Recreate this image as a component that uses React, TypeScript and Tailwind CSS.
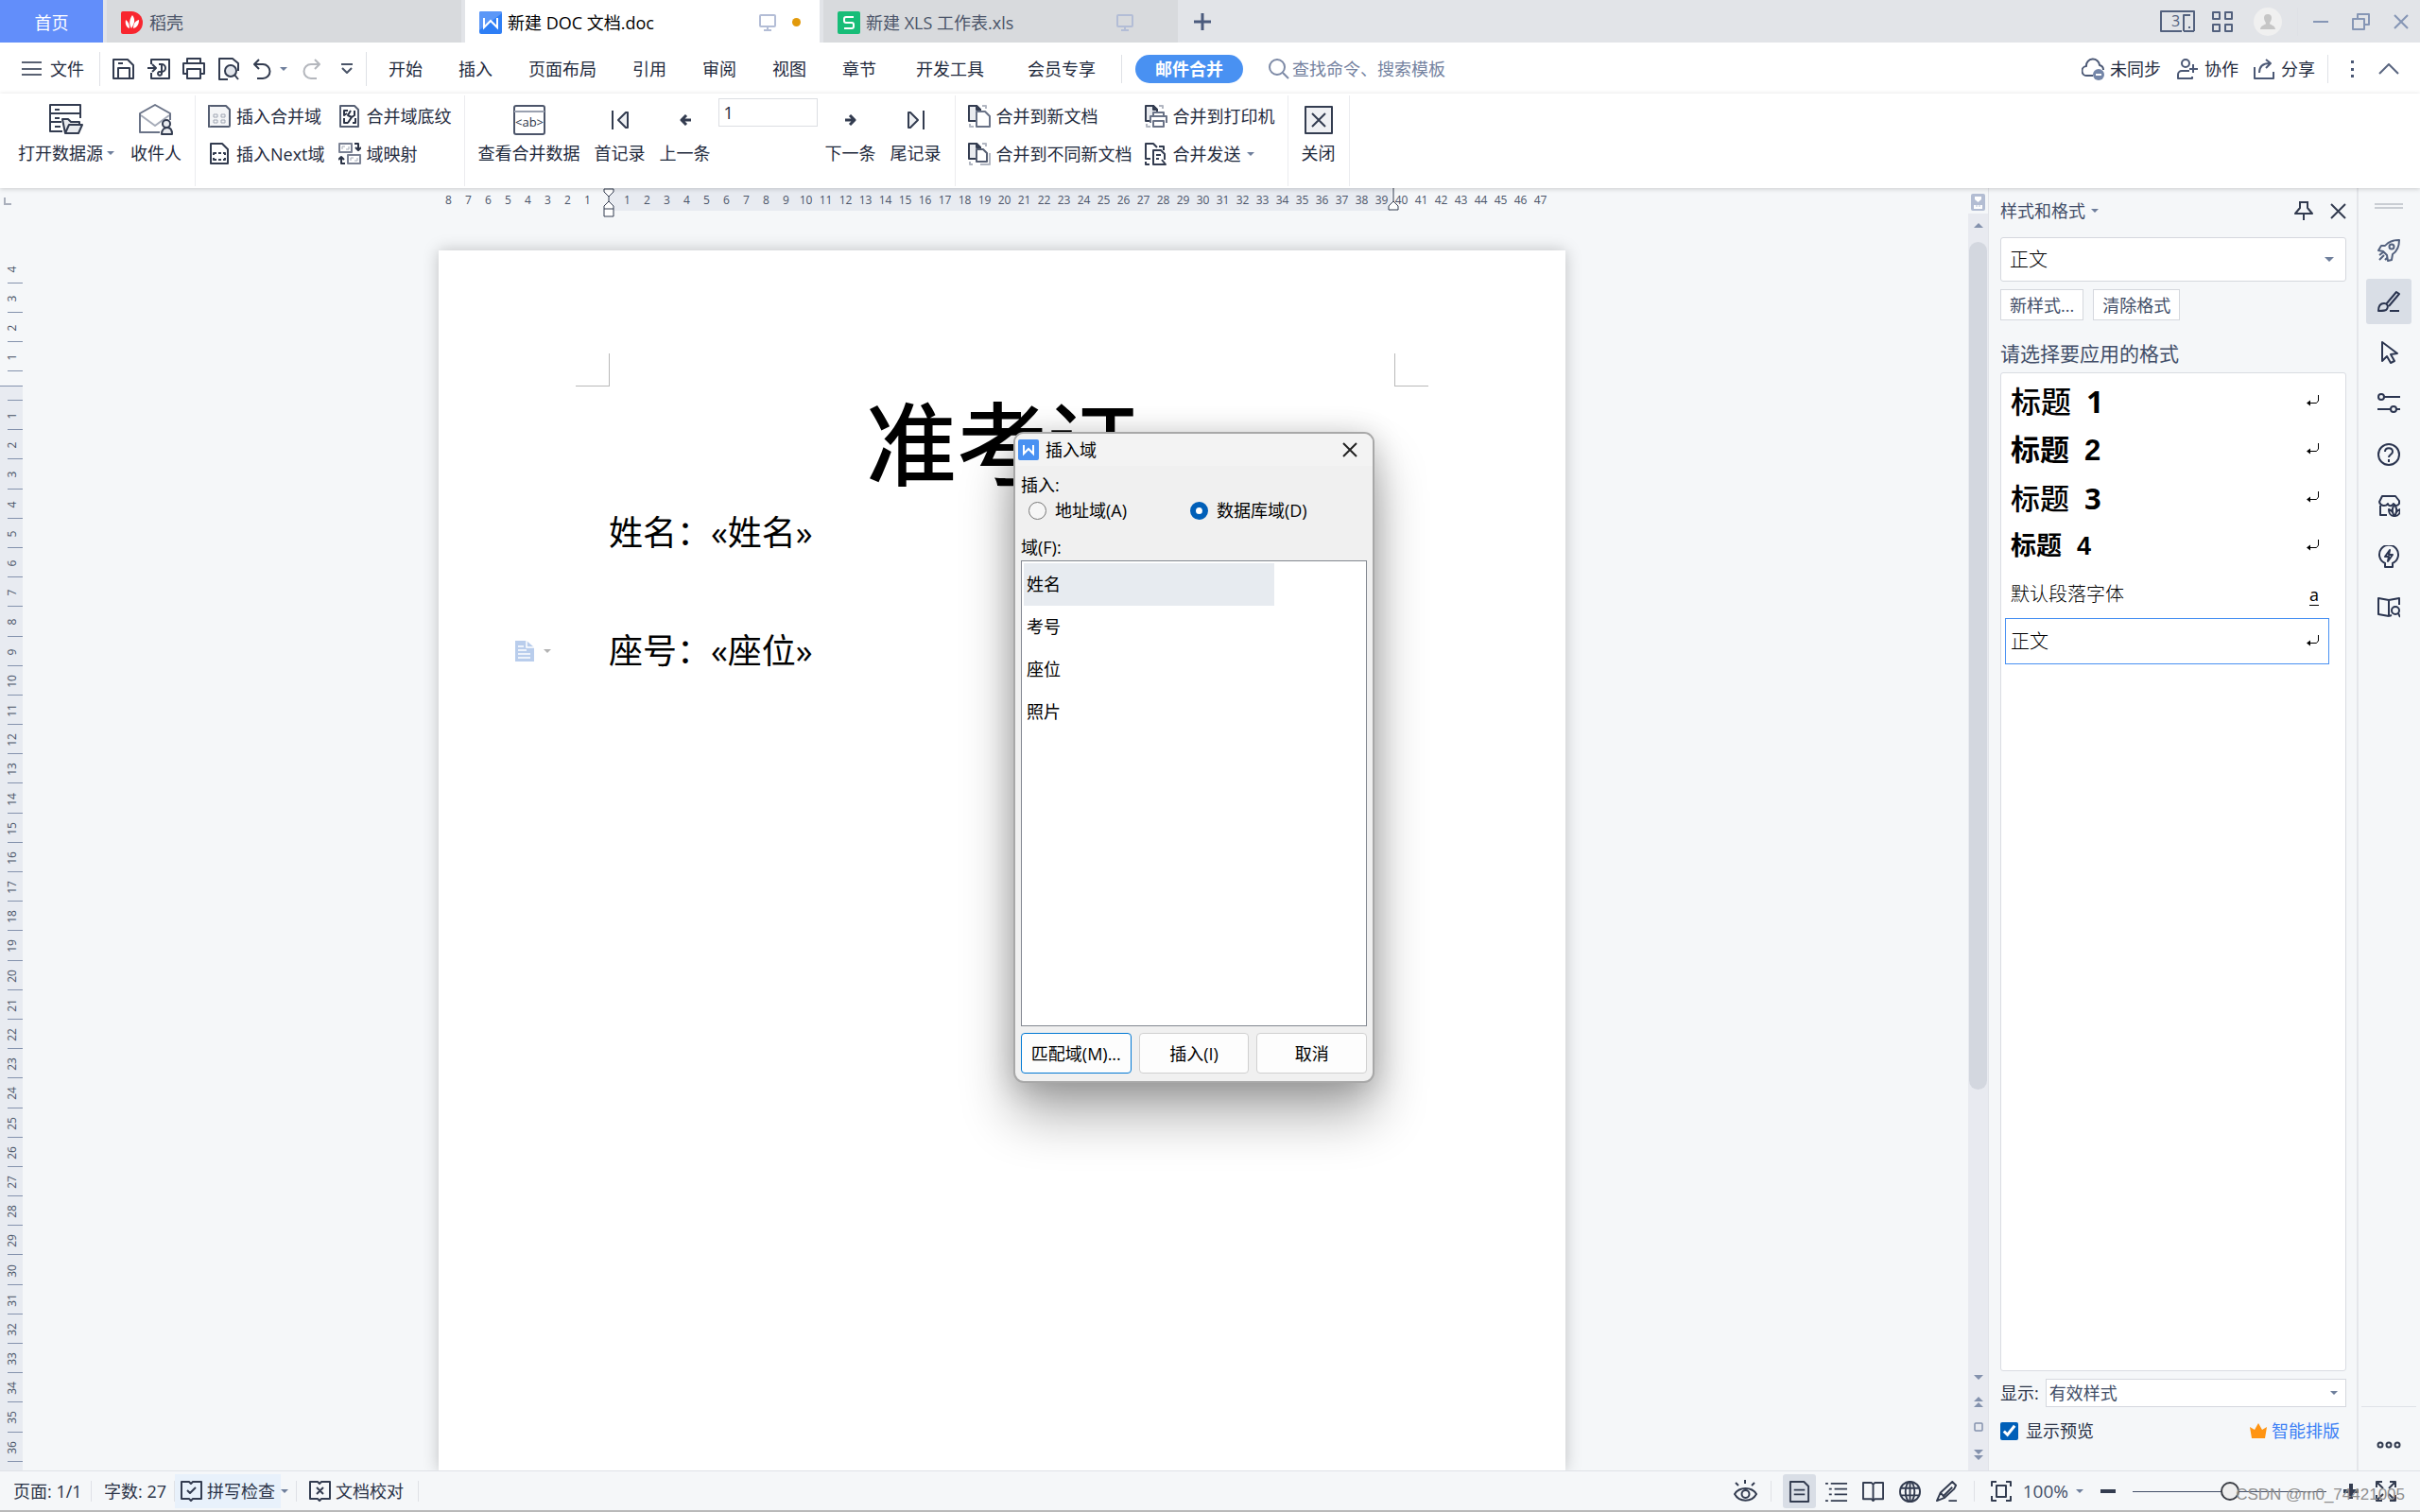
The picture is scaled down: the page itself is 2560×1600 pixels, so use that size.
import React from 'react';

type IconProps = {
  w?: number;
  h?: number;
  box?: string;
  stroke?: string;
  sw?: number;
  className?: string;
  children: React.ReactNode;
};

const Icon = ({ w = 24, h = 24, box, stroke = '#333c50', sw = 2, className = '', children }: IconProps) => (
  <svg
    width={w}
    height={h}
    viewBox={box ?? `0 0 ${w} ${h}`}
    fill="none"
    stroke={stroke}
    strokeWidth={sw}
    strokeLinejoin="round"
    className={`shrink-0 ${className}`}
    aria-hidden="true"
  >
    {children}
  </svg>
);

const Caret = ({ w = 10, color = '#6f7f9c' }: { w?: number; color?: string }) => (
  <svg width={w} height={w / 2} viewBox="0 0 10 5" className="pointer-events-none shrink-0" aria-hidden="true">
    <path d="M0 0h10L5 5z" fill={color} />
  </svg>
);

const Divider = ({ className = 'h-9' }: { className?: string }) => (
  <span className={`w-px shrink-0 bg-[#dfe1e6] ${className}`} />
);

/* ---------- tab bar ---------- */

const Monitor = () => (
  <Icon w={18} h={18} stroke="#b3bdd6">
    <rect x="1" y="1" width="16" height="12" rx="1" />
    <path d="M9 13v4M5 17h8" />
  </Icon>
);

const TabBar = () => (
  <header className="flex h-[45px] shrink-0 items-stretch gap-1 bg-[#e2e4e8]">
    <button className="w-[109px] bg-[#628efa] pt-[2px] text-white">首页</button>
    <button className="flex w-[375px] items-center gap-[6px] bg-[#d8dadd] pt-[2px] pl-[15px] text-[#4a5468]">
      <svg width="24" height="24" viewBox="0 0 24 24" className="shrink-0" aria-hidden="true">
        <path d="M2 0h9a12 12 0 0 1 0 24H2a2 2 0 0 1-2-2V2a2 2 0 0 1 2-2z" fill="#f8262f" />
        <path d="M12 4c3 4 3 8-1 14-3-5-2-10 1-14z" fill="#fff" />
        <path d="M5 9c3 2 4 5 4 9-3-1-5-4-4-9zM19 9c-4 1-6 4-6 9 4-1 6-4 6-9z" fill="#fff" />
      </svg>
      稻壳
    </button>
    <button className="flex w-[375px] items-center gap-[6px] bg-white pt-[2px] pl-[15px] text-black">
      <svg width="24" height="24" viewBox="0 0 24 24" className="shrink-0" aria-hidden="true">
        <rect width="24" height="24" rx="2" fill="#2e7ef5" />
        <path d="M0 2a2 2 0 0 1 2-2h20a2 2 0 0 1 2 2L0 20z" fill="#5b97f7" />
        <path d="M5 7v10l7-7 7 7V7" fill="none" stroke="#fff" strokeWidth="2" />
      </svg>
      <span className="flex-1 text-left">新建 DOC 文档.doc</span>
      <Monitor />
      <span className="mr-5 ml-[11px] size-[9px] rounded-full bg-[#e29a0b]" />
    </button>
    <button className="flex w-[375px] items-center gap-[6px] bg-[#d8dadd] pt-[2px] pr-[47px] pl-[15px] text-[#4a5468]">
      <svg width="24" height="24" viewBox="0 0 24 24" className="shrink-0" aria-hidden="true">
        <rect width="24" height="24" rx="2" fill="#17bd78" />
        <path d="M17 6H9a2 2 0 0 0-2 2v2a2 2 0 0 0 2 2h6a2 2 0 0 1 2 2v2a2 2 0 0 1-2 2H7" fill="none" stroke="#fff" strokeWidth="2" />
      </svg>
      <span className="flex-1 text-left">新建 XLS 工作表.xls</span>
      <Monitor />
    </button>
    <button className="ml-3" aria-label="新建标签">
      <Icon w={20} h={20} stroke="#4b5b7d" sw={3}><path d="M10 1v18M1 10h18" /></Icon>
    </button>
    <div className="mr-3 ml-auto flex items-center">
      <button aria-label="窗口数" className="mr-[18px]">
        <Icon w={37} h={23} stroke="#53617e">
          <path d="M23 22H1V1h35v21M25 22V5h7M25 22h11" />
          <text x="12" y="17" fontSize="16" fill="#53617e" stroke="none">3</text>
          <path d="M30 18h2" />
        </Icon>
      </button>
      <button aria-label="应用" className="mr-[22px]">
        <Icon w={22} h={22} stroke="#53617e">
          <path d="M1 1h7v7H1zM14 1h7v7h-7zM1 14h7v7H1zM14 14h7v7h-7z" />
        </Icon>
      </button>
      <button aria-label="账户">
        <svg width="30" height="30" viewBox="0 0 30 30" aria-hidden="true">
          <circle cx="15" cy="15" r="15" fill="#f0f0f0" />
          <path d="M15 7a4 4 0 0 1 4 4c0 3-2 4-2 6 0 1 6 2 6 6H7c0-4 6-5 6-6 0-2-2-3-2-6a4 4 0 0 1 4-4z" fill="#c6c6c6" />
        </svg>
      </button>
      <Divider className="mx-4 h-[30px] bg-[#c5c9d1]" />
      <div className="flex items-center gap-[25px]">
        <button aria-label="最小化">
          <Icon w={16} h={16} stroke="#8696b5"><path d="M0 8h16" /></Icon>
        </button>
        <button aria-label="还原">
          <Icon w={19} h={18} stroke="#8696b5"><path d="M1 6h12v11H1zM6 6V1h12v11h-5" /></Icon>
        </button>
        <button aria-label="关闭">
          <Icon w={16} h={16} stroke="#8696b5"><path d="M1 1l14 14M15 1L1 15" /></Icon>
        </button>
      </div>
    </div>
  </header>
);

/* ---------- menu ---------- */

const MenuBar = () => (
  <nav className="flex h-[54px] shrink-0 items-center bg-white pt-[2px] text-[#1f2a3d]">
    <button className="ml-[23px] flex items-center gap-[9px]">
      <Icon w={21} h={16} stroke="#5a6273"><path d="M0 1h21M0 8h21M0 14h21" /></Icon>
      文件
    </button>
    <Divider className="ml-4 h-9" />
    <div className="ml-[13px] flex items-center">
      <div className="flex items-center gap-[13px]">
        <button aria-label="保存">
          <Icon><path d="M1 2h15l6 6v14H1zM6 22V11h12v11M6 6h5" /></Icon>
        </button>
        <button aria-label="输出为PDF">
          <Icon>
            <path d="M4 7V2h19v20H4v-6M0 11h8M5 7l4 4-4 4M12 7h3a3 3 0 0 1 0 8h-3a2 2 0 1 0 3 2V8" />
          </Icon>
        </button>
        <button aria-label="打印">
          <Icon>
            <path d="M5 6V1h14v5M5 17H1V6h22v11h-4" />
            <path d="M5 12h14v10H5z" />
          </Icon>
        </button>
        <button aria-label="打印预览">
          <Icon>
            <path d="M11 23H2V1h14l6 5v8" />
            <circle cx="14" cy="14" r="6" fill="#e3e6ec" />
            <path d="M18 18l4 5" />
          </Icon>
        </button>
        <button aria-label="撤销" className="flex items-center gap-[8px]">
          <Icon w={21} h={22}><path d="M7 1L2 6l5 5M2 6h9a7 7 0 0 1 0 15H5" /></Icon>
          <Caret w={8} />
        </button>
      </div>
      <button aria-label="恢复" className="ml-[15px]">
        <Icon w={21} h={22} stroke="#b4b7bd"><path d="M14 1l5 5-5 5M19 6h-9a7 7 0 0 0 0 15h6" /></Icon>
      </button>
      <button aria-label="自定义快速访问工具栏" className="ml-[21px]">
        <Icon w={12} h={13} stroke="#4a5468"><path d="M0 1h12M1 5l5 5 5-5" /></Icon>
      </button>
    </div>
    <Divider className="ml-[14px] h-9" />
    <div className="ml-[23px] flex items-center gap-[38px]">
      {['开始', '插入', '页面布局', '引用', '审阅', '视图', '章节'].map((t) => (
        <button key={t}>{t}</button>
      ))}
      <button className="ml-1">开发工具</button>
      <button className="ml-2">会员专享</button>
    </div>
    <Divider className="mr-[14px] ml-[27px] h-[30px]" />
    <button className="h-[30px] w-[114px] rounded-full bg-[#4991f2] font-bold text-white">邮件合并</button>
    <label className="ml-[27px] flex items-center gap-[3px]">
      <Icon w={22} h={22} stroke="#7d8aa6"><circle cx="9" cy="9" r="8" /><path d="M15 15l6 6" /></Icon>
      <input className="w-[220px] outline-none placeholder:text-[#74829f]" placeholder="查找命令、搜索模板" />
    </label>
    <div className="mr-[22px] ml-auto flex items-center">
      <button className="flex items-center gap-[5px]">
        <Icon w={25} h={24} stroke="#4b5875">
          <path d="M12 19H6a5 5 0 0 1-1-10 7 7 0 0 1 14-1 5 5 0 0 1 4 5" />
          <circle cx="18" cy="18" r="6" fill="#7486a8" stroke="none" />
          <path d="M15 18h6" stroke="#fff" />
        </Icon>
        未同步
      </button>
      <button className="ml-[17px] flex items-center gap-[7px]">
        <Icon w={22} h={22} stroke="#4b5875">
          <circle cx="9" cy="5" r="4" />
          <path d="M13 13H5a4 4 0 0 0-4 4v4h15v-2M17 6v9M13 11h9" />
        </Icon>
        协作
      </button>
      <button className="ml-4 flex items-center gap-[7px]">
        <Icon w={22} h={22} stroke="#4b5875"><path d="M1 9v12h20v-7M6 15c0-7 4-10 11-10M13 1l5 4-5 5" /></Icon>
        分享
      </button>
      <Divider className="ml-[13px] h-[30px]" />
      <button aria-label="更多" className="ml-[23px]">
        <Icon w={4} h={20} stroke="none"><path d="M1 1h3v3H1zM1 9h3v3H1zM1 16h3v3H1z" fill="#4b5875" /></Icon>
      </button>
      <button aria-label="折叠功能区" className="ml-[26px]">
        <Icon w={22} h={12} stroke="#5a6680"><path d="M1 11L11 1l10 10" /></Icon>
      </button>
    </div>
  </nav>
);

/* ---------- ribbon ---------- */

type RibbonButtonProps = { icon: React.ReactNode; label: string; caret?: boolean };

const BigButton = ({ icon, label, caret }: RibbonButtonProps) => (
  <button className="flex flex-col items-center gap-[6px] pt-[9px]">
    <span className="flex h-[34px] items-center">{icon}</span>
    <span className="flex items-center gap-1 leading-6">
      {label}
      {caret && <Caret w={8} />}
    </span>
  </button>
);

const SmallButton = ({ icon, label, caret }: RibbonButtonProps) => (
  <button className="flex h-6 items-center gap-[6px] leading-6">
    {icon}
    <span className="flex items-center gap-[6px]">
      {label}
      {caret && <Caret w={8} />}
    </span>
  </button>
);

const MergeIcon = ({ children }: { children: React.ReactNode }) => (
  <Icon>
    <path d="M8 17H1V1h8l4 4v3" fill="#e9ebef" />
    <path d="M9 1l4 4H9z" fill="#333c50" />
    {children}
  </Icon>
);

const Ribbon = () => (
  <div className="z-10 flex h-[100px] shrink-0 items-stretch bg-white py-[2px] text-[#1f2a3d] shadow-[0_1px_5px_rgba(0,0,0,0.18)] *:flex *:items-start *:border-r *:border-[#ebecef]">
    <div className="gap-[17px] pr-[14px] pl-[19px]">
      <BigButton
        label="打开数据源"
        caret
        icon={
          <Icon w={36} h={34}>
            <path d="M14 29H1V1h32v14M1 10h32M6 6h5M6 15h5M1 19h12M6 24h6" />
            <path d="M17 31l-3-15h6l3 3h9v3M17 31l4-9h14l-4 9z" fill="#e9ebef" />
          </Icon>
        }
      />
      <BigButton
        label="收件人"
        icon={
          <Icon w={36} h={34}>
            <path d="M2 12L17 23l15-11" stroke="#a5abb8" />
            <path d="M22 30H1V10L17 1l16 9v7" stroke="#6a7387" />
            <circle cx="29" cy="21" r="4" fill="#e9ebef" />
            <path d="M24 32h11c0-5-2-7-5-7s-6 2-6 7z" fill="#e9ebef" />
          </Icon>
        }
      />
    </div>
    <div className="gap-[14px] px-[13px]">
      <div className="flex flex-col gap-4 pt-[10px]">
        <SmallButton
          label="插入合并域"
          icon={
            <Icon stroke="#555e72">
              <path d="M3 1h16l4 4v17a1 1 0 0 1-1 1H3a1 1 0 0 1-2-1V2a1 1 0 0 1 2-1z" fill="#f4f5f7" />
              <path d="M6 10h4v3H6zM14 10h4v3h-4zM6 16h4v3H6zM14 16h4v3h-4z" stroke="#a0a6b3" strokeWidth="1" />
            </Icon>
          }
        />
        <SmallButton
          label="插入Next域"
          icon={
            <Icon>
              <path d="M3 1h12l6 6v15H3z" />
              <path d="M9 11H6v2M6 16v2h3M11 11h3M11 18h3M16 11h2v2M18 16v2h-2" />
            </Icon>
          }
        />
      </div>
      <div className="flex flex-col gap-4 pt-[10px]">
        <SmallButton
          label="合并域底纹"
          icon={
            <Icon stroke="#555e72">
              <path d="M2 1h15l4 4v18H2z" />
              <path d="M10 6H6v5l3-2M6 14v5h4M13 6l-3 5 4 2-4 6M17 6v5l-3 2M18 14v5h-3" stroke="#2b3346" />
            </Icon>
          }
        />
        <SmallButton
          label="域映射"
          icon={
            <Icon stroke="#7b8294">
              <path d="M1 1h13v9H1zM10 13h13v9H10z" />
              <path d="M4 7V4h3M11 4v3H8M13 19v-3h3M20 16v3h-3" stroke="#a5abb8" strokeWidth="1" />
              <path d="M17 1h4v7M18 5l3 3 3-3M7 22H3v-7M0 18l3-3 3 3" stroke="#2b3346" />
            </Icon>
          }
        />
      </div>
    </div>
    <div className="px-[14px]">
      <div className="flex gap-[15px]">
        <BigButton
          label="查看合并数据"
          icon={
            <Icon w={34} h={32} stroke="#4c556a">
              <rect x="1" y="1" width="32" height="30" rx="2" />
              <path d="M1 7h32" stroke="#9aa1b0" />
              <text x="17" y="23" fontSize="13" textAnchor="middle" fill="#2b3346" stroke="none">&lt;ab&gt;</text>
            </Icon>
          }
        />
        <BigButton
          label="首记录"
          icon={<Icon w={20} h={20}><path d="M2 0v20M18 2v16h-2L8 10l8-8z" fill="#eef0f3" /></Icon>}
        />
        <BigButton label="上一条" icon={<Icon w={12} h={12} sw={3}><path d="M12 6H3M7 1L2 6l5 5" /></Icon>} />
      </div>
      <input
        aria-label="记录"
        defaultValue="1"
        className="mx-2 mt-[3px] h-[30px] w-[105px] border border-[#dcdee2] px-[5px] outline-none"
      />
      <div className="flex gap-[15px]">
        <BigButton label="下一条" icon={<Icon w={12} h={12} sw={3}><path d="M0 6h9M5 1l5 5-5 5" /></Icon>} />
        <BigButton
          label="尾记录"
          icon={<Icon w={20} h={20}><path d="M18 0v20M2 2v16h2l8-8-8-8z" fill="#eef0f3" /></Icon>}
        />
      </div>
    </div>
    <div className="gap-[13px] px-[13px]">
      <div className="flex flex-col gap-4 pt-[10px]">
        <SmallButton
          label="合并到新文档"
          icon={
            <MergeIcon>
              <path d="M15 1h4v3M2 20v3h4" stroke="#b1b6c1" />
              <path d="M9 7h9l5 5v11H9z" fill="#fff" stroke="#6a7387" />
            </MergeIcon>
          }
        />
        <SmallButton
          label="合并到不同新文档"
          icon={
            <MergeIcon>
              <path d="M15 1h4v3M2 20v3h3M23 11v12H13" stroke="#b1b6c1" />
              <path d="M9 7h7l4 4v9H9z" fill="#fff" stroke="#555e72" />
            </MergeIcon>
          }
        />
      </div>
      <div className="flex flex-col gap-4 pt-[10px]">
        <SmallButton
          label="合并到打印机"
          icon={
            <MergeIcon>
              <path d="M15 1h4v3M2 20v3h4" stroke="#b1b6c1" />
              <path d="M9 12V8h11v4M6 19v-7h17v7" fill="#fff" stroke="#6a7387" />
              <path d="M9 17h11v6H9z" fill="#fff" stroke="#6a7387" />
            </MergeIcon>
          }
        />
        <SmallButton
          label="合并发送"
          caret
          icon={
            <Icon>
              <path d="M6 17H1V1h8l4 4M15 4h5v4M1 20v3h4" />
              <path d="M21 18v-6l-4-4H9v15h13l-4-5M12 13h5M12 17h3" fill="#fff" />
            </Icon>
          }
        />
      </div>
    </div>
    <div className="px-[14px]">
      <BigButton
        label="关闭"
        icon={
          <Icon w={30} h={30}>
            <rect x="1" y="1" width="28" height="28" fill="#eff0f3" />
            <path d="M8 8l14 14M22 8L8 22" />
          </Icon>
        }
      />
    </div>
  </div>
);

/* ---------- document ---------- */

const range = (n: number, from = 1) => Array.from({ length: n }, (_, i) => i + from);

const VerticalRuler = () => (
  <div className="flex w-6 shrink-0 flex-col text-[12px] text-[#4a5468]">
    <div className="h-[70px] shrink-0 pt-[10px] pl-1">
      <span className="block size-2 border-b-2 border-l-2 border-[#a9afbb]" />
    </div>
    {[4, 3, 2, 1].map((n) => (
      <div key={n} className="ml-2 flex h-[31px] w-4 shrink-0 items-center justify-center border-b border-[#8492ad] pt-[2px] pr-[6px]">
        <span className="-rotate-90">{n}</span>
      </div>
    ))}
    <div className="h-4 shrink-0 border-b border-[#8492ad]" />
    <div className="flex flex-1 flex-col bg-[#e8ebf1] pb-[9px]">
      <span className="ml-2 h-[15px] w-4 border-b border-[#8492ad]" />
      {range(36).map((n) => (
        <div key={n} className="ml-2 flex w-4 flex-1 items-center justify-center border-b border-[#8492ad] pt-[2px] pr-[6px]">
          <span className="-rotate-90">{n}</span>
        </div>
      ))}
    </div>
  </div>
);

const RulerNumber = ({ n }: { n: number }) => <span className="w-[21px] text-center">{n}</span>;

const HorizontalRuler = () => (
  <div className="relative flex h-6 w-[1192px] shrink-0 text-[12px] leading-[26px] text-[#4a5468]">
    <div className="flex w-[180px]">
      {range(8).reverse().map((n) => <RulerNumber key={n} n={n} />)}
    </div>
    <div className="flex w-[828px] bg-[#e8ebf1] pl-[9px]">
      {range(39).map((n) => <RulerNumber key={n} n={n} />)}
    </div>
    <div className="flex">{range(8, 40).map((n) => <RulerNumber key={n} n={n} />)}</div>
    {/* indent markers */}
    <Icon w={12} h={32} sw={1} className="absolute top-0 left-[174px]">
      <path d="M1 1h10v3L6 9 1 4zM6 9v5M6 14l5 5v11H1V19zM1 22h10" fill="#fff" />
    </Icon>
    <Icon w={12} h={24} sw={1} className="absolute top-0 left-[1004px]">
      <path d="M6 0v14M6 14l5 5v4H1v-4z" fill="#fff" />
    </Icon>
  </div>
);

const Page = () => (
  <article className="mt-[42px] w-[1192px] flex-1 bg-white pt-[109px] text-black shadow-[0_0_16px_rgba(0,0,0,0.22)]">
    <div className="flex h-[35px] justify-between px-[145px]">
      <span className="w-9 border-r border-b border-[#b9b9b9]" />
      <span className="w-9 border-b border-l border-[#b9b9b9]" />
    </div>
    <h1 className="mb-1 text-center text-[96px] leading-[120px] font-medium">准考证</h1>
    <p className="pl-[180px] text-[36px] leading-[62px]">姓名：«姓名»</p>
    <p className="h-[63px]" />
    <div className="flex items-center pl-[81px]">
      <button className="flex w-[99px] items-center gap-[10px]" aria-label="粘贴选项">
        <svg width="20" height="22" viewBox="0 0 20 22" aria-hidden="true">
          <path d="M0 0h12l8 7v15H0z" fill="#b9cdec" />
          <path d="M12 0v7h8M3 6h6M3 10h9M3 14h13M3 18h13" stroke="#fff" strokeWidth="1.500" fill="none" />
        </svg>
        <Caret w={8} color="#b3b3b3" />
      </button>
      <p className="text-[36px] leading-[62px]">座号：«座位»</p>
    </div>
  </article>
);

const ScrollBar = () => (
  <div className="flex w-[22px] shrink-0 flex-col items-center border-r border-[#e1e3e8]">
    <svg width="15" height="18" viewBox="0 0 15 18" className="mt-[6px] mb-[3px]" aria-hidden="true">
      <rect width="15" height="18" rx="2" fill="#b3bdd3" />
      <path d="M4 3h7v3L7.500 9 4 6zM3 12h9v4H3z" fill="#fff" />
      <path d="M6 12v2M9 12v2" stroke="#b3bdd3" />
    </svg>
    <div className="flex w-full flex-1 flex-col items-center bg-[#e8eaf0]">
      <svg width="10" height="30" viewBox="0 0 10 30" aria-hidden="true"><path d="M0 15h10L5 10z" fill="#8492ad" /></svg>
      <div className="w-[19px] flex-[897] rounded-full bg-[#d3d7df]" />
      <div className="flex-[301]" />
      <svg width="10" height="102" viewBox="0 0 10 102" aria-hidden="true">
        <path d="M0 1h10L5 6zM0 29h10l-5-5zM0 35h10l-5-5zM0 80h10l-5 5zM0 86h10l-5 5z" fill="#8492ad" />
        <rect x="1" y="52" width="8" height="8" rx="1" fill="none" stroke="#8492ad" strokeWidth="1.500" />
      </svg>
    </div>
  </div>
);

/* ---------- styles pane ---------- */

const Enter = () => (
  <Icon w={13} h={13} stroke="#000" sw={1}>
    <path d="M12.500 0v6l-2 2.500H3" />
    <path d="M4 5.500v6l-4-3z" fill="#000" stroke="none" />
  </Icon>
);

const headings = [
  { level: 1, size: 'text-[32px]', weight: 'font-medium', digit: "font-['Open_Sans',sans-serif]" },
  { level: 2, size: 'text-[31px]', weight: 'font-bold', digit: "font-['Liberation_Sans',sans-serif]" },
  { level: 3, size: 'text-[31px]', weight: 'font-medium', digit: "font-['Open_Sans',sans-serif]" },
  { level: 4, size: 'text-[27px]', weight: 'font-bold', digit: "font-['Liberation_Sans',sans-serif]" },
];

const StylesPane = () => (
  <aside className="flex w-[391px] shrink-0 flex-col border-r-2 border-[#e4e6ea] pr-[11px] pl-3 text-[#424e68]">
    <div className="mt-3 flex h-6 items-center">
      <button className="flex items-center gap-[6px]">样式和格式 <Caret w={8} /></button>
      <button className="ml-auto" aria-label="固定">
        <Icon w={20} h={20}><path d="M5 1h10M6 1v6l-5 6h18l-5-6V1M10 13v7" /></Icon>
      </button>
      <button className="ml-[18px]" aria-label="关闭窗格">
        <Icon w={17} h={17}><path d="M1 1l15 15M16 1L1 16" /></Icon>
      </button>
    </div>
    <div className="mt-4 flex h-[47px] shrink-0 items-center rounded-[3px] border border-[#d5d8de] bg-white pr-3 text-black">
      <select aria-label="样式" className="flex-1 appearance-none pl-[9px] text-[20px] font-light outline-none">
        <option>正文</option>
      </select>
      <Caret />
    </div>
    <div className="mt-2 flex gap-[10px] *:h-[33px] *:border *:border-[#d5d8de] *:bg-white *:px-[9px] *:whitespace-nowrap">
      <button>新样式...</button>
      <button>清除格式</button>
    </div>
    <h2 className="mt-[19px] h-[36px] text-[21px] leading-[32px]">请选择要应用的格式</h2>
    <ul className="flex-1 rounded-[3px] border border-[#d9dce2] bg-white pt-1 text-black">
      {headings.map((s) => (
        <li key={s.level} className="flex h-[51px] items-center justify-between pr-7 pl-[10px]">
          <span className={`flex items-baseline gap-4 ${s.size} ${s.weight}`}>
            标题 <span className={`font-bold ${s.digit}`}>{s.level}</span>
          </span>
          <Enter />
        </li>
      ))}
      <li className="flex h-[51px] items-center justify-between pr-7 pl-[10px] text-[20px] font-light">
        默认段落字体
        <span className="text-[18px] leading-5 font-normal underline underline-offset-4">a</span>
      </li>
      <li className="mr-[17px] ml-1 flex h-[49px] items-center justify-between border border-[#4991f2] pr-[10px] pl-[5px] text-[20px] font-light">
        正文
        <Enter />
      </li>
    </ul>
    <label className="mt-2 flex h-[30px] shrink-0 items-center gap-[7px] text-[#2a3347]">
      显示:
      <span className="flex h-full flex-1 items-center border border-[#d5d8de] bg-white pr-2">
        <select className="flex-1 appearance-none pl-[3px] text-[#424e68] outline-none">
          <option>有效样式</option>
        </select>
        <Caret w={8} />
      </span>
    </label>
    <div className="mt-[11px] mb-7 flex h-7 items-center">
      <label className="flex items-center gap-[8px] text-[#2a3347]">
        <input type="checkbox" defaultChecked className="size-[19px] accent-[#005fb8]" />
        显示预览
      </label>
      <a href="#layout" className="mr-[7px] ml-auto flex items-center gap-[5px] text-[#3b7ff5]">
        <svg width="18" height="16" viewBox="0 0 18 16" aria-hidden="true">
          <path d="M0 4l5 3 4-7 4 7 5-3-2 12H2z" fill="#ff9412" />
        </svg>
        智能排版
      </a>
    </div>
  </aside>
);

const railIcons: { label: string; body: React.ReactNode; active?: boolean }[] = [
  {
    label: '快捷',
    body: <><path d="M8 7C12 2 17 1 23 1c0 6-1 11-7 15l-1 6-4 1-1-6-4-4-5-1 3-5zM2 17l4-3M2 22l5-5M8 22l2-2" stroke="#53617e" /><circle cx="15" cy="8" r="2.500" stroke="#53617e" /></>,
  },
  { label: '样式', active: true, body: <><path d="M9 15L20 2l3 2-11 13M1 22c0-5 2-8 6-8 3 0 5 3 3 6-1 2-4 2-9 2zM13 22h10" /></> },
  { label: '选择', body: <path d="M5 1v20l5-5 4 7 4-2-4-7 7-1z" /> },
  { label: '属性', body: <><circle cx="4" cy="5" r="3" /><circle cx="17" cy="18" r="3" /><path d="M7 5h17M0 18h14M20 18h4" /></> },
  { label: '帮助', body: <><circle cx="12" cy="12" r="11" /><path d="M8 9c0-5 8-5 8 0 0 3-4 3-4 6M12 17v3" /></> },
  {
    label: '素材',
    body: <><path d="M5 2h14l4 5v3c-2 3-5 2-6 0-2 3-5 3-6 0-2 3-8 3-9-2zM3 12v10h7" /><path d="M18 11c3 4 3 8 0 12-3-4-3-8 0-12zM12 16c3 1 5 3 5 7-3 0-5-3-5-7zM24 16c-3 1-5 3-5 7 3 0 5-3 5-7z" fill="#f5f7f9" /></>,
  },
  { label: '灵感', body: <path d="M8 19a10 10 0 1 1 8 0v4H8zM13 5l-5 7h4l-1 5 5-7h-4z" /> },
  { label: '阅读', body: <><path d="M12 4v17M12 21L1 19V2l11 2 11-2v7M12 21l3-1" /><circle cx="19" cy="15" r="4" /><path d="M22 18l2 4" /></> },
];

const SideRail = () => (
  <div className="flex w-[65px] shrink-0 flex-col items-center pr-[2px] text-[#2b3346]">
    <span className="mt-4 mb-5 h-[6px] w-[30px] border-y-2 border-[#c9cdd3]" />
    <div className="flex flex-col items-center gap-[6px]">
      {railIcons.map((r) => (
        <button
          key={r.label}
          aria-label={r.label}
          className={`flex size-12 items-center justify-center rounded-[3px] ${r.active ? 'bg-[#d9dee6]' : ''}`}
        >
          <Icon stroke="#2b3550">{r.body}</Icon>
        </button>
      ))}
    </div>
    <button aria-label="更多工具" className="mt-auto flex h-[68px] w-[58px] items-center justify-center border-t border-[#dfe2e7] pt-3">
      <Icon w={26} h={8}><circle cx="4" cy="4" r="2.500" /><circle cx="13" cy="4" r="2.500" /><circle cx="22" cy="4" r="2.500" /></Icon>
    </button>
  </div>
);

/* ---------- status bar ---------- */

const views: { label: string; body: React.ReactNode; active?: boolean }[] = [
  { label: '页面视图', active: true, body: <path d="M2 1h15l5 5v17H2zM6 10h12M6 15h12" /> },
  { label: '大纲', body: <path d="M0 3h3M6 3h18M4 9h3M10 9h14M4 15h3M10 15h14M0 22h3M6 22h18" /> },
  { label: '阅读版式', body: <path d="M12 3v20M1 2h9l2 2 2-2h9v18h-9l-2 2-2-2H1z" /> },
  { label: 'Web版式', body: <><circle cx="12" cy="12" r="11" /><ellipse cx="12" cy="12" rx="5" ry="11" /><path d="M12 1v22M2 8h20M2 16h20" /></> },
  { label: '写作模式', body: <path d="M1 22l4-9L18 1l4 4-2 4L9 19l-8 3zM5 13l4 5M18 7L8 17M14 22h9" /> },
];

const StatusBar = () => (
  <footer className="shrink-0 border-b-2 border-[#b9b9b9] bg-[#f5f7f9] text-[#2a3347]">
    <div className="flex h-[42px] items-center border-t border-[#dfe2e7] pt-px">
      <span className="w-[83px] pl-[14px] whitespace-nowrap">页面: 1/1</span>
      <Divider className="mx-[13px] h-[22px]" />
      <span className="w-[68px] whitespace-nowrap">字数: 27</span>
      <Divider className="ml-[6px] h-[22px]" />
      <button className="flex h-9 items-center gap-[5px] bg-[#e8f1fb] px-[6px]">
        <Icon w={23} h={22}><path d="M1 1h8l2 2 2-2h9v18h-9l-2 2-2-2H1zM7 10l3 3 6-6" /></Icon>
        拼写检查
      </button>
      <Caret w={8} />
      <Divider className="ml-2 h-[22px]" />
      <button className="ml-[13px] flex items-center gap-[5px]">
        <Icon w={23} h={22}><path d="M1 1h8l2 2 2-2h9v18h-9l-2 2-2-2H1zM8 7l7 7M15 7l-7 7" /></Icon>
        文档校对
      </button>
      <Divider className="ml-[15px] h-[22px]" />

      <div className="ml-auto flex items-center">
        <button aria-label="护眼模式">
          <Icon w={25} h={24}>
            <path d="M1 15c5-8 18-8 23 0-5 9-18 9-23 0zM12 0v4M2 3l3 3M22 3l-3 3" />
            <circle cx="12.500" cy="15" r="4" />
          </Icon>
        </button>
        <Divider className="mr-3 ml-[14px] h-[22px]" />
        <div className="flex gap-1">
          {views.map((v) => (
            <button
              key={v.label}
              aria-label={v.label}
              className={`flex h-9 w-[35px] items-center justify-center rounded-[3px] ${v.active ? 'bg-[#d9dee6]' : ''}`}
            >
              <Icon w={23} h={23} box="0 0 24 24">{v.body}</Icon>
            </button>
          ))}
        </div>
        <Divider className="mr-[17px] ml-[11px] h-[22px]" />
        <button aria-label="适应页面">
          <Icon w={22} h={22}><path d="M1 6V1h5M16 1h5v5M21 16v5h-5M6 21H1v-5M6 5h10v12H6z" /></Icon>
        </button>
        <button className="ml-3 flex items-center gap-2 text-[19px] text-[#424e68]">100% <Caret w={8} /></button>
        <button aria-label="缩小" className="ml-[18px]">
          <Icon w={16} h={16} sw={4}><path d="M0 8h16" /></Icon>
        </button>
        <input
          type="range"
          aria-label="缩放"
          min={0}
          max={100}
          defaultValue={50}
          className="mx-[18px] h-5 w-[205px] appearance-none bg-[linear-gradient(#424e68,#424e68)] bg-[length:100%_1px] bg-center bg-no-repeat [&::-webkit-slider-thumb]:size-5 [&::-webkit-slider-thumb]:appearance-none [&::-webkit-slider-thumb]:rounded-full [&::-webkit-slider-thumb]:border-2 [&::-webkit-slider-thumb]:border-[#3c3f46] [&::-webkit-slider-thumb]:bg-[#eee]"
        />
        <button aria-label="放大">
          <Icon w={16} h={16} sw={4}><path d="M0 8h16M8 0v16" /></Icon>
        </button>
        <button aria-label="全屏" className="mr-[25px] ml-[18px]">
          <Icon w={22} h={22}><path d="M1 7V1h6M15 1h6v6M21 15v6h-6M7 21H1v-6M1 1l7 7M21 1l-7 7M21 21l-7-7M1 21l7-7" /></Icon>
        </button>
      </div>
    </div>
  </footer>
);

/* ---------- dialog ---------- */

const fields = ['姓名', '考号', '座位', '照片'];

const Radio = ({ label, checked }: { label: string; checked?: boolean }) => (
  <label className="flex w-[171px] items-center gap-[9px] leading-[30px]">
    <input
      type="radio"
      name="kind"
      defaultChecked={checked}
      className="size-[19px] appearance-none rounded-full border border-[#777] bg-[#f6f6f6] checked:border-[6px] checked:border-[#005fb8] checked:bg-white"
    />
    {label}
  </label>
);

const InsertFieldDialog = () => (
  <section
    role="dialog"
    aria-label="插入域"
    className="absolute top-[457px] left-[1072px] z-20 w-[382px] rounded-[11px] border-2 border-[#a8a8a8] bg-[#f0f0f0] text-black shadow-[0_34px_56px_rgba(0,0,0,0.32),0_4px_32px_rgba(0,0,0,0.2)]"
  >
    <div className="flex h-[34px] items-center rounded-t-[9px] bg-[#f3f3f3] pr-4 pl-[3px]">
      <svg width="22" height="22" viewBox="0 0 22 22" aria-hidden="true">
        <rect width="22" height="22" rx="2" fill="#4991f2" />
        <path d="M6 6v9l5-5 5 5V6" fill="none" stroke="#fff" strokeWidth="2" />
      </svg>
      <span className="ml-[7px]">插入域</span>
      <button className="ml-auto" aria-label="关闭对话框">
        <Icon w={16} h={16} stroke="#222"><path d="M1 1l14 14M15 1L1 15" /></Icon>
      </button>
    </div>
    <div className="px-[6px] pb-2">
      <fieldset className="pt-2">
        <legend className="float-left w-full leading-6">插入:</legend>
        <div className="clear-both flex items-center pl-2">
          <Radio label="地址域(A)" />
          <Radio label="数据库域(D)" checked />
        </div>
      </fieldset>
      <h3 className="mt-3 mb-[2px] leading-6">域(F):</h3>
      <ul className="h-[493px] border border-[#828790] bg-white p-[2px]">
        {fields.map((f, i) => (
          <li key={f} className={`h-[45px] w-[265px] pl-[3px] leading-[45px] ${i === 0 ? 'bg-[#e7ebf0]' : ''}`}>{f}</li>
        ))}
      </ul>
      <div className="mt-[7px] grid grid-cols-3 gap-2 *:h-[43px] *:rounded-[4px] *:border *:bg-[#fdfdfd] *:whitespace-nowrap">
        <button className="border-[#0078d4]">匹配域(M)...</button>
        <button className="border-[#d0d0d0]">插入(I)</button>
        <button className="border-[#d0d0d0]">取消</button>
      </div>
    </div>
  </section>
);

export default function App() {
  return (
    <div className="relative flex h-screen flex-col overflow-hidden bg-[#f5f7f9] font-['Open_Sans','Noto_Sans_CJK_SC',sans-serif] text-[18px] leading-6">
      <TabBar />
      <MenuBar />
      <Ribbon />
      <main className="flex min-h-0 flex-1">
        <VerticalRuler />
        <div className="flex flex-1 flex-col items-center overflow-hidden pl-[14px]">
          <HorizontalRuler />
          <Page />
        </div>
        <ScrollBar />
        <StylesPane />
        <SideRail />
      </main>
      <StatusBar />
      <InsertFieldDialog />
      <span className="pointer-events-none absolute right-4 bottom-1 z-20 text-[17px] leading-7 text-[#8f8f8f] font-['Liberation_Sans',sans-serif]">
        CSDN @m0_74421005
      </span>
    </div>
  );
}
